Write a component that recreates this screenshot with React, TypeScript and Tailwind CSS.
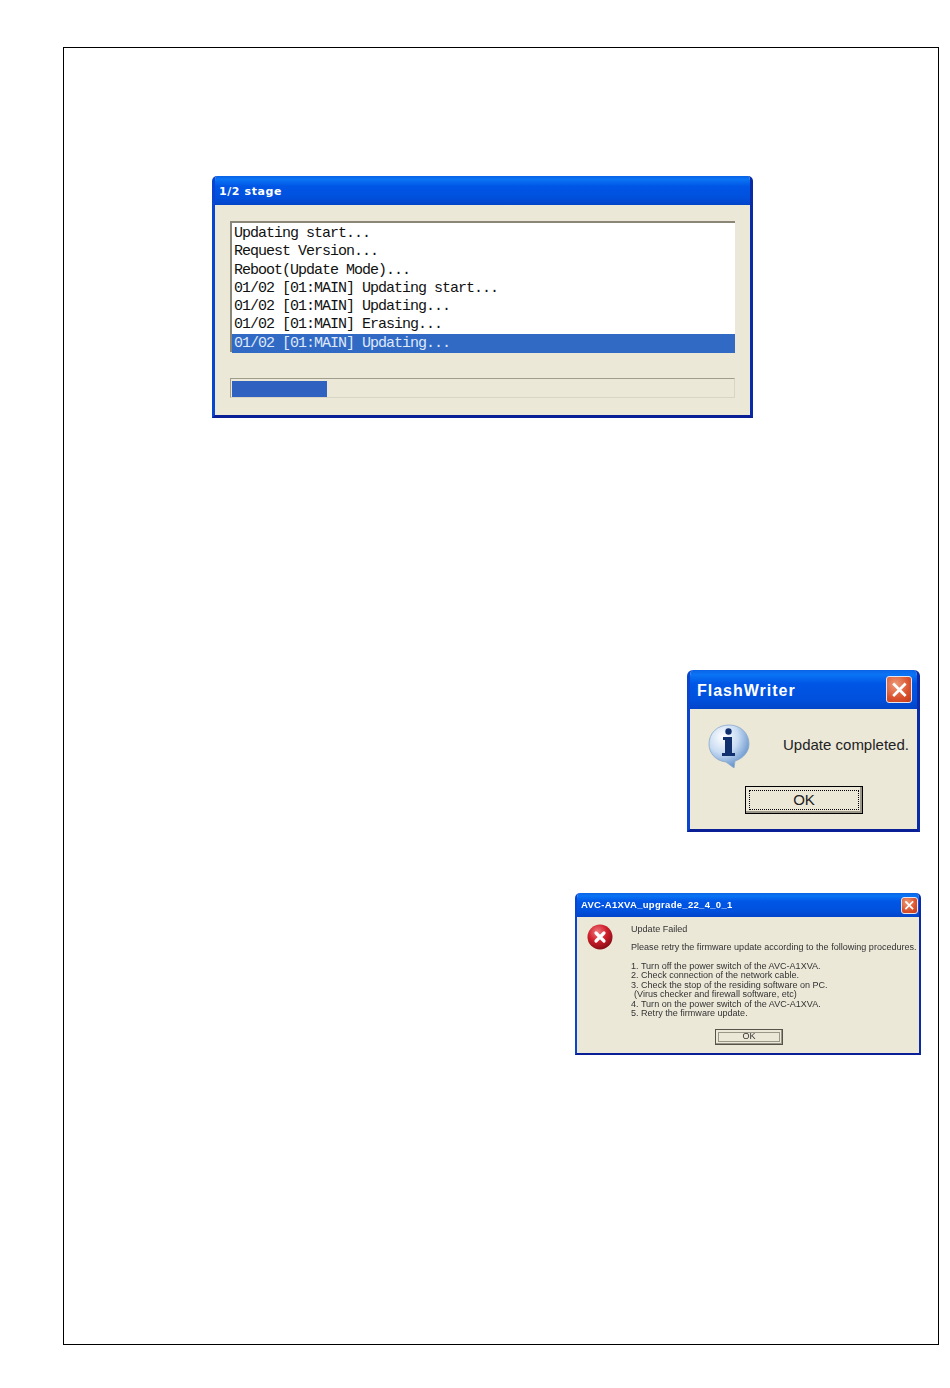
function CloseButton({ className }: { className: string }) {
  return (
    <div className={`flex items-center justify-center rounded-[3px] border border-[#e8e4ee] bg-[radial-gradient(circle_at_35%_30%,#ee9a78,#d9512c_60%,#c23a1a)] ${className}`}>
      <svg viewBox="0 0 16 16" className="h-[70%] w-[70%]">
        <path d="M3 3 13 13M13 3 3 13" stroke="#fff" strokeWidth="2.6" strokeLinecap="square" />
      </svg>
    </div>
  )
}

function InfoIcon() {
  return (
    <svg viewBox="0 0 42 44" className="h-[44px] w-[42px]">
      <defs>
        <radialGradient id="bubble" cx="35%" cy="28%" r="75%">
          <stop offset="0%" stopColor="#ffffff" />
          <stop offset="50%" stopColor="#c9dcf3" />
          <stop offset="100%" stopColor="#5f8fca" />
        </radialGradient>
      </defs>
      <path
        d="M21 1C9.500 1 1 9 1 20c0 10 7.500 17 17 18l8 6 1-7c8-2.500 14-9 14-17C41 9 32.500 1 21 1Z"
        fill="url(#bubble)"
        stroke="#8aa8cc"
        strokeWidth="0.8"
      />
      <circle cx="20.500" cy="7.500" r="3.200" fill="#12306e" />
      <path d="M15 13h9v16h3v3H14v-3h3V16h-2Z" fill="#12306e" />
    </svg>
  )
}

function ErrorIcon() {
  return (
    <svg viewBox="0 0 26 26" className="h-[26px] w-[26px] shrink-0">
      <defs>
        <radialGradient id="err" cx="40%" cy="30%" r="75%">
          <stop offset="0%" stopColor="#f07a80" />
          <stop offset="50%" stopColor="#cf1f2b" />
          <stop offset="100%" stopColor="#7e0c14" />
        </radialGradient>
      </defs>
      <circle cx="13" cy="13" r="12.500" fill="url(#err)" />
      <path d="M9 9 17 17M17 9 9 17" stroke="#fff" strokeWidth="3.200" strokeLinecap="round" />
    </svg>
  )
}

const logLines = [
  "Updating start...",
  "Request Version...",
  "Reboot(Update Mode)...",
  "01/02 [01:MAIN] Updating start...",
  "01/02 [01:MAIN] Updating...",
  "01/02 [01:MAIN] Erasing...",
]

const titleBar =
  "bg-[linear-gradient(180deg,#0a62e6_0%,#0a74f4_12%,#0056e6_35%,#0050dc_75%,#0344c8_100%)]"

export default function App() {
  return (
    <div className="h-[1388px] w-[950px] bg-white pl-[63px] pt-[47px]">
      <div className="flex h-[1298px] w-[876px] flex-col border border-black">
        {/* progress window */}
        <div className="ml-[148px] mt-[128px] flex h-[242px] w-[541px] flex-col overflow-hidden rounded-t-[5px] border-b-[3px] border-l-[3px] border-r-[3px] border-b-[#0a1f96] border-l-[#0a45d0] border-r-[#0a2aa8] bg-[#ebe8d8]">
          <div className={`-mx-[3px] flex h-[29px] shrink-0 items-center pl-[7px] pt-[3px] font-['DejaVu_Sans',sans-serif] text-[11px] font-bold tracking-[0.6px] text-white ${titleBar}`}>
            1/2 stage
          </div>
          <div className="ml-[15px] mt-[16px] h-[131px] w-[505px] border-l-2 border-t-2 border-l-[#8a8778] border-t-[#8a8778] bg-white pl-[2px] pt-[2px] font-['Liberation_Mono',monospace] text-[15px] leading-[18.3px] tracking-[-1px] text-[#111]">
            {logLines.map((line) => (
              <div key={line} className="h-[18.3px] whitespace-pre">{line}</div>
            ))}
            <div className="-ml-[2px] -mt-[1px] h-[19px] whitespace-pre bg-[#316ac5] pl-[2px] pt-[1px] text-[#dfe8f8]">01/02 [01:MAIN] Updating...</div>
          </div>
          <div className="ml-[15px] mt-[26px] h-[20px] w-[505px] border border-[#d8d5c4] border-t-[#a09d8c] border-l-[#a09d8c] pl-[1px] pt-[2px]">
            <div className="h-[16px] w-[95px] bg-[#2f62c0]" />
          </div>
        </div>

        {/* update completed dialog */}
        <div className="ml-[623px] mt-[252px] flex h-[162px] w-[233px] flex-col overflow-hidden rounded-t-[6px] border-b-[3px] border-l-[3px] border-r-[3px] border-b-[#0a1f96] border-l-[#0a45d0] border-r-[#0a2aa8] bg-[#ebe8d8]">
          <div className={`-mx-[3px] flex h-[39px] shrink-0 items-center justify-between pl-[10px] pr-[8px] font-['Liberation_Sans',sans-serif] text-[16px] font-bold tracking-[1px] text-white ${titleBar}`}>
            <span className="pt-[3px]">FlashWriter</span>
            <CloseButton className="h-[27px] w-[26px]" />
          </div>
          <div className="flex items-start pl-[18px] pt-[15px]">
            <InfoIcon />
            <span className="ml-[33px] mt-[11px] whitespace-nowrap font-['Liberation_Sans',sans-serif] text-[15px] leading-[20px] text-[#222]">
              Update completed.
            </span>
          </div>
          <div className="ml-[55px] mt-[18px] flex h-[28px] w-[118px] items-center justify-center border border-black bg-[#ebe8d8] p-[3px] shadow-[inset_-2px_-2px_0_#9a9788]">
            <div className="flex h-full w-full items-center justify-center border border-dotted border-black font-['Liberation_Sans',sans-serif] text-[15px] text-[#222]">
              OK
            </div>
          </div>
        </div>

        {/* update failed dialog */}
        <div className="ml-[511px] mt-[61px] flex h-[162px] w-[346px] flex-col overflow-hidden rounded-t-[5px] border-b-2 border-l-2 border-r-2 border-b-[#0a1f96] border-l-[#0a45d0] border-r-[#0a2aa8] bg-[#ebe8d8]">
          <div className={`-mx-[2px] flex h-[24px] shrink-0 items-center justify-between pl-[6px] pr-[3px] font-['Liberation_Sans',sans-serif] text-[9.500px] font-bold tracking-[0.3px] text-white ${titleBar}`}>
            <span className="blur-[0.4px]">AVC-A1XVA_upgrade_22_4_0_1</span>
            <CloseButton className="h-[17px] w-[17px]" />
          </div>
          <div className="flex pl-[10px] pt-[7px]">
            <ErrorIcon />
            <div className="ml-[18px] whitespace-nowrap font-['Liberation_Sans',sans-serif] text-[9.050px] leading-[9.400px] text-[#333] blur-[0.4px]">
              <p className="h-[19px] pt-[1px]">Update Failed</p>
              <p className="h-[19px]">Please retry the firmware update according to the following procedures.</p>
              <p>1. Turn off the power switch of the AVC-A1XVA.</p>
              <p>2. Check connection of the network cable.</p>
              <p>3. Check the stop of the residing software on PC.</p>
              <p className="pl-[3px]">(Virus checker and firewall software, etc)</p>
              <p>4. Turn on the power switch of the AVC-A1XVA.</p>
              <p>5. Retry the firmware update.</p>
            </div>
          </div>
          <div className="ml-[138px] mt-auto mb-[8px] flex h-[16px] w-[68px] items-center justify-center border border-[#55534a] p-[2px] shadow-[inset_-1px_-1px_0_#9a9788]">
            <div className="flex h-full w-full items-center justify-center border border-[#9a9788] font-['Liberation_Sans',sans-serif] text-[9px] text-[#333] blur-[0.4px]">
              OK
            </div>
          </div>
        </div>
      </div>
    </div>
  )
}
